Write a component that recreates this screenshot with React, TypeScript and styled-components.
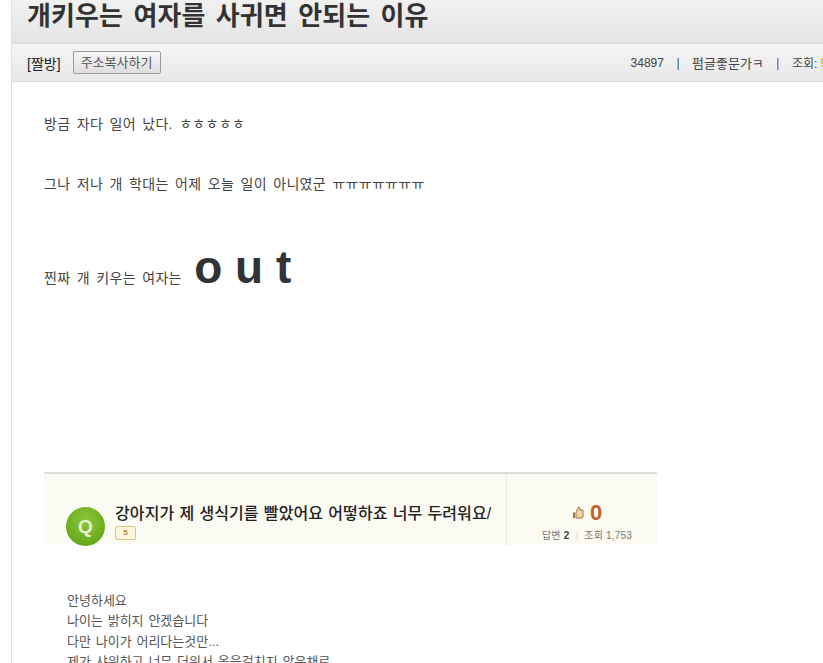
import React from "react";
import styled, { createGlobalStyle } from "styled-components";

const GlobalStyle = createGlobalStyle`
  html, body { margin: 0; padding: 0; background: #fff; overflow: hidden; }
  body { font-family: "Liberation Sans", "Noto Sans CJK KR", sans-serif; color: #333; }
`;

const Page = styled.div`
  width: 823px;
  height: 663px;
  overflow: hidden;
  padding-left: 11px;
  box-sizing: border-box;
`;

const Board = styled.div`
  width: 812px;
  height: 663px;
  border-left: 1px solid #ddd;
  box-sizing: border-box;
  overflow: hidden;
`;

const TitleBar = styled.div`
  height: 44px;
  box-sizing: border-box;
  border-bottom: 1px solid #d9d9d9;
  background: linear-gradient(#f1f1f1, #e4e4e4);
  padding-left: 15px;
`;

const Title = styled.h1`
  margin: 0;
  font-size: 26px;
  line-height: 32px;
  font-weight: bold;
  letter-spacing: 0.1px;
  word-spacing: 3px;
  color: #333;
  white-space: nowrap;
`;

const MetaBar = styled.div`
  height: 38px;
  box-sizing: border-box;
  border-bottom: 1px solid #d9d9d9;
  background: linear-gradient(#f5f5f5, #e8e8e8);
  padding-left: 15px;
  display: flex;
  align-items: center;
  white-space: nowrap;
  > * { flex: none; }
`;

const Category = styled.span`
  font-size: 14px;
  color: #222;
  margin-right: 12px;
`;

const CopyButton = styled.button`
  width: 88px;
  height: 23px;
  padding: 0 0 3px;
  border: 1px solid #9a9a9a;
  border-radius: 2px;
  background: linear-gradient(#f6f6f6, #dedede);
  font: 13px "Liberation Sans", "Noto Sans CJK KR", sans-serif;
  color: #555;
`;

const Stats = styled.div`
  margin-left: 470px;
  display: flex;
  align-items: center;
  font-size: 12px;
  color: #444;
`;

const Writer = styled.span`
  font-size: 13px;
`;

const Sep = styled.span<{ $color: string }>`
  color: ${(p) => p.$color};
  margin: 0 12.5px;
`;

const Views = styled.span`
  margin-left: 3px;
  color: #e0a800;
`;

const Content = styled.div`
  padding: 33px 0 0 32px;
  font-size: 14px;
  letter-spacing: 0.3px;
  word-spacing: 2.2px;
  color: #444;
`;

const Line = styled.p<{ $mt: number }>`
  margin: ${(p) => p.$mt}px 0 0;
  line-height: 18px;
  white-space: nowrap;
`;

const Big = styled.span`
  font-size: 46px;
  font-weight: bold;
  color: #333;
  margin-left: 6px;
  word-spacing: 0;
  letter-spacing: 0;
`;

const BigLine = styled.p`
  margin: 47px 0 0;
  line-height: 55px;
  white-space: nowrap;
`;

const Question = styled.div`
  margin-top: 166px;
  width: 613px;
  height: 74px;
  box-sizing: border-box;
  border-top: 2px solid #ddd;
  background: linear-gradient(#fbfbf3, #fbfbf3 97%, #fff);
  display: flex;
  letter-spacing: 0;
  word-spacing: 0;
`;

const QuestionMain = styled.div`
  width: 463px;
  box-sizing: border-box;
  border-right: 1px solid #ecece2;
  padding: 29px 0 0 22px;
  display: flex;
  gap: 10px;
`;

const QBadge = styled.div`
  width: 39px;
  height: 39px;
  margin-top: 4px;
  border-radius: 50%;
  background: radial-gradient(circle at 50% 35%, #8cc63a, #57a012);
  color: #e9f5d0;
  font-size: 19px;
  font-weight: bold;
  display: flex;
  align-items: center;
  justify-content: center;
  flex: none;
`;

const QuestionText = styled.div`
  font-size: 16px;
  font-weight: 500;
  letter-spacing: 0.1px;
  word-spacing: 0.6px;
  line-height: 20px;
  margin-top: 1px;
  color: #222;
  white-space: nowrap;
`;

const Coin = styled.div`
  width: 19px;
  height: 12px;
  margin-top: 2px;
  border: 1px solid #d8c48e;
  border-radius: 2px;
  background: #fdf6dc;
  color: #b08a3a;
  font-size: 8px;
  font-weight: bold;
  line-height: 12px;
  text-align: center;
`;

const QuestionStats = styled.div`
  flex: 1;
  padding: 26px 0 0 10px;
  display: flex;
  flex-direction: column;
  align-items: center;
`;

const Likes = styled.div`
  display: flex;
  align-items: center;
  gap: 6px;
  font-size: 22px;
  line-height: 25px;
  font-weight: bold;
  color: #c4622d;
`;

const Counts = styled.div`
  margin-top: 4px;
  font-size: 10px;
  letter-spacing: 0.2px;
  line-height: 14px;
  color: #777;
  white-space: nowrap;
  b { color: #444; }
  i { font-style: normal; color: #ddd; margin: 0 6px; }
`;

const Story = styled.div`
  margin: 45px 0 0 23px;
  font-size: 13px;
  letter-spacing: 0;
  word-spacing: 1.2px;
  line-height: 20.3px;
  color: #555;
  white-space: nowrap;
`;

const Thumb = () => (
  <svg width="12" height="13" viewBox="0 0 12 13">
    <path d="M1 6.500h2v5.500H1z" fill="#a86c35" />
    <path d="M4 6l2.500-5c1.200 0 1.800 1 1.300 3H11v7l-1 1H4z" fill="#ead6a8" stroke="#a9773f" strokeWidth="1" />
  </svg>
);

export default function App() {
  return (
    <Page>
      <GlobalStyle />
      <Board>
        <TitleBar>
          <Title>개키우는 여자를 사귀면 안되는 이유</Title>
        </TitleBar>
        <MetaBar>
          <Category>[짤방]</Category>
          <CopyButton>주소복사하기</CopyButton>
          <Stats>
            34897
            <Sep $color="#1c5c3c">|</Sep>
            <Writer>펌글좋문가ㅋ</Writer>
            <Sep $color="#8b2a8b">|</Sep>
            조회:<Views>9</Views>
          </Stats>
        </MetaBar>
        <Content>
          <Line $mt={0}>방금 자다 일어 났다. ㅎㅎㅎㅎㅎ</Line>
          <Line $mt={42}>그나 저나 개 학대는 어제 오늘 일이 아니였군 ㅠㅠㅠㅠㅠㅠㅠ</Line>
          <BigLine>
            찐짜 개 키우는 여자는 <Big>o u t</Big>
          </BigLine>
          <Question>
            <QuestionMain>
              <QBadge>Q</QBadge>
              <QuestionText>
                강아지가 제 생식기를 빨았어요 어떻하죠 너무 두려워요/
                <Coin>5</Coin>
              </QuestionText>
            </QuestionMain>
            <QuestionStats>
              <Likes>
                <Thumb />0
              </Likes>
              <Counts>
                답변 <b>2</b>
                <i>|</i>조회 1,753
              </Counts>
            </QuestionStats>
          </Question>
          <Story>
            안녕하세요
            <br />
            나이는 밝히지 안겠습니다
            <br />
            다만 나이가 어리다는것만...
            <br />
            제가 샤워하고 너무 더워서 옷을걸치지 않은채로
          </Story>
        </Content>
      </Board>
    </Page>
  );
}
